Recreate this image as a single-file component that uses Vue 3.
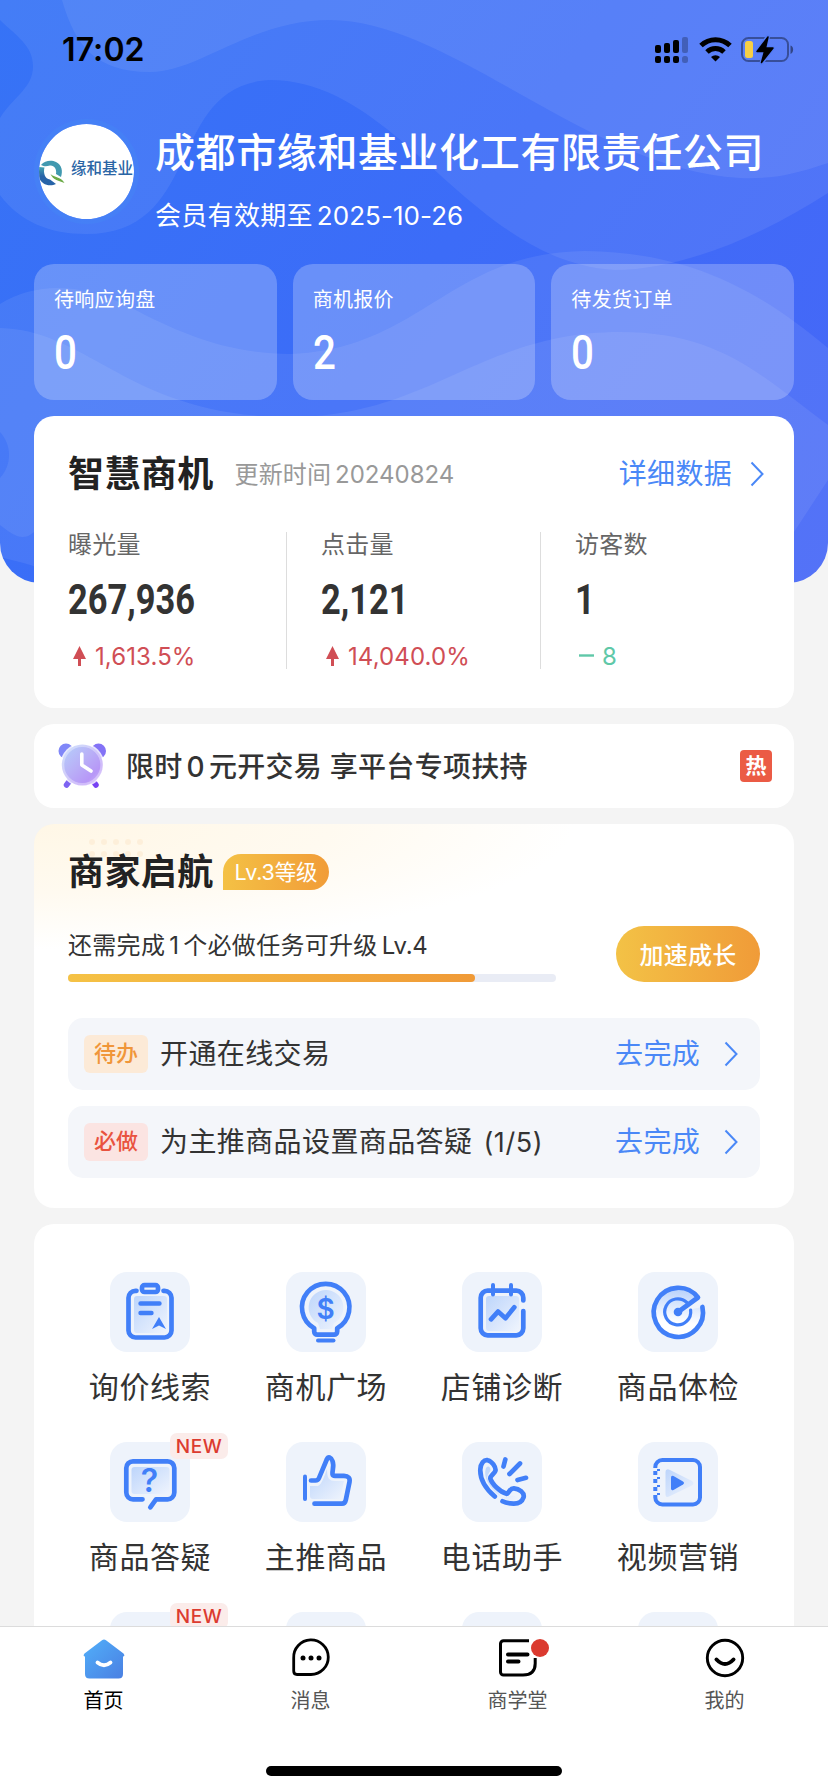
<script setup>
const stats = [
  { label: '待响应询盘', value: '0' },
  { label: '商机报价', value: '2' },
  { label: '待发货订单', value: '0' },
]
const metrics = [
  { label: '曝光量', value: '267,936', delta: '1,613.5%', up: true },
  { label: '点击量', value: '2,121', delta: '14,040.0%', up: true },
  { label: '访客数', value: '1', delta: '8', up: false },
]
const tasks = [
  { tag: '待办', kind: 'todo', text: '开通在线交易', count: '' },
  { tag: '必做', kind: 'must', text: '为主推商品设置商品答疑', count: '(1/5)' },
]
const tools = [
  { icon: 'clip', label: '询价线索' },
  { icon: 'bulb', label: '商机广场' },
  { icon: 'calendar', label: '店铺诊断' },
  { icon: 'radar', label: '商品体检' },
  { icon: 'chat', label: '商品答疑', isNew: true },
  { icon: 'thumb', label: '主推商品' },
  { icon: 'phone', label: '电话助手' },
  { icon: 'video', label: '视频营销' },
  { isNew: true },
  {},
  {},
  {},
]
const tabs = [
  { icon: 'home', label: '首页', active: true },
  { icon: 'msg', label: '消息' },
  { icon: 'school', label: '商学堂' },
  { icon: 'me', label: '我的' },
]
</script>

<template>
  <div class="page">
    <svg class="hero-bg" width="828" height="583" viewBox="0 0 828 583">
      <defs>
        <linearGradient id="hero" x1="0" y1="0" x2="828" y2="583" gradientUnits="userSpaceOnUse">
          <stop offset="0" stop-color="#3673f6" />
          <stop offset=".5" stop-color="#3c6cf8" />
          <stop offset="1" stop-color="#4767f7" />
        </linearGradient>
        <clipPath id="heroClip"><path d="M0 0H828V543a40 40 0 0 1-40 40H40a40 40 0 0 1-40-40Z" /></clipPath>
      </defs>
      <g clip-path="url(#heroClip)">
        <rect width="828" height="583" fill="url(#hero)" />
        <g fill="#fff" fill-opacity=".075">
          <path d="M0 0H828V193C760 237 680 270 615 270C470 262 400 80 270 80C165 85 205 234 86 234C50 234 20 222 0 195V118C15 95 33 88 33 66C33 45 15 35 0 20Z" />
          <path d="M62 0H828V163C790 176 770 179 740 178C590 170 450 20 330 20C250 20 200 72 150 72C95 72 75 45 62 0Z" />
          <path d="M0 304C40 280 85 285 130 307C180 334 230 354 290 354C420 350 450 252 585 251C700 252 770 300 828 348V583H60C45 565 20 563 0 557Z" />
          <path d="M0 328C90 330 130 417 290 417C430 417 480 332 620 332C720 332 760 375 828 425V480L794 532H34C22 543 12 534 0 525V478C12 465 12 445 0 432Z" />
        </g>
      </g>
    </svg>

    <div class="content">
      <header class="status">
        <span class="time">17:02</span>
        <svg width="160" height="32" viewBox="0 0 160 32">
          <g>
            <rect x="5" y="11" width="6" height="8" rx="2" /><rect x="14" y="9" width="6" height="10" rx="2" /><rect x="23" y="6" width="6" height="13" rx="2" />
            <rect x="5" y="22" width="6" height="7" rx="2" /><rect x="14" y="22" width="6" height="7" rx="2" /><rect x="23" y="22" width="6" height="7" rx="2" />
            <g opacity=".25"><rect x="32" y="3" width="6" height="16" rx="2" /><rect x="32" y="22" width="6" height="7" rx="2.5" /></g>
          </g>
          <g fill="none" stroke="#000" stroke-width="5">
            <path d="M51 11.5a21 21 0 0 1 29 0" /><path d="M57 18a12.3 12.3 0 0 1 17 0" />
          </g>
          <path d="M61 23a6.5 6.5 0 0 1 9 0l-4.5 4.6Z" />
          <rect x="92" y="4" width="46" height="23" rx="6.5" fill="none" stroke="#000" stroke-opacity=".38" stroke-width="2" />
          <path d="M140.5 11.5c3.5 1 3.500 7 0 8.500Z" fill-opacity=".45" />
          <rect x="95" y="7" width="8" height="17" rx="2.500" fill="#f7cf46" />
          <path d="M118 2.500L107 17.500h7.500L111.500 29 123 14h-7.500Z" stroke="#527bf7" stroke-width="4" stroke-linejoin="round" />
          <path d="M118 3L107 17.500h7.500L111.500 28.500 123 14h-7.500Z" stroke="#000" stroke-width="1.500" stroke-linejoin="round" />
        </svg>
      </header>

      <section class="company">
        <div class="avatar">
          <svg width="26" height="30" viewBox="0 0 26 30">
            <defs><linearGradient id="q" x1="0" y1="0" x2="0" y2="1"><stop offset="0" stop-color="#43a3b0" /><stop offset=".5" stop-color="#2763a8" /></linearGradient></defs>
            <path d="M2 6C6 1 13 1 17 3C23 6 24 12 22 18L17 15C18 10 15 6 11 6.500C8 7 6 8 2 6Z" fill="#4199b0" />
            <path d="M0 8L5.500 8.500C4 14 6 20 11 20.500L17 25C11 28 2 26 0 18Z" fill="url(#q)" />
            <path d="M11.500 15c4 4 10 2 14 9C20 22 14 21 11.500 15Z" fill="#6cab47" />
          </svg>
          <span>缘和基业</span>
        </div>
        <div class="company-text">
          <h1>成都市缘和基业化工有限责任公司</h1>
          <p>会员有效期至<span class="n">2025-10-26</span></p>
        </div>
      </section>

      <section class="stats">
        <div v-for="s in stats" :key="s.label" class="stat">
          <div class="stat-label">{{ s.label }}</div>
          <div class="stat-value">{{ s.value }}</div>
        </div>
      </section>

      <section class="card insight">
        <div class="row-head">
          <h2>智慧商机</h2>
          <span class="updated">更新时间<span class="n">20240824</span></span>
          <span class="link">详细数据</span>
          <svg class="chev" width="14" height="26" viewBox="0 0 14 26"><path d="M1.500 1.500L12.500 13L1.500 24.500" /></svg>
        </div>
        <div class="metrics">
          <div v-for="m in metrics" :key="m.label" class="metric">
            <div class="metric-label">{{ m.label }}</div>
            <div class="metric-value">{{ m.value }}</div>
            <div class="delta" :class="{ flat: !m.up }">
              <svg v-if="m.up" width="24" height="22" viewBox="0 0 24 22"><path d="M11.500 1L18 14h-5v7h-3v-7H5Z" fill="#d04e55" /></svg>
              <svg v-else width="24" height="22" viewBox="0 0 24 22"><path d="M4 10.500H19" stroke="#5fc8a8" stroke-width="2.400" /></svg>
              <span>{{ m.delta }}</span>
            </div>
          </div>
        </div>
      </section>

      <section class="card notice">
        <svg width="50" height="46" viewBox="0 0 50 46">
          <defs>
            <linearGradient id="face" x1="0" y1="0" x2="1" y2="1"><stop offset="0" stop-color="#b5d3fb" /><stop offset=".45" stop-color="#b9b0f7" /><stop offset=".75" stop-color="#b797f7" /><stop offset="1" stop-color="#d2bdfa" /></linearGradient>
          </defs>
          <circle cx="8" cy="8" r="7.500" fill="#8087f8" /><circle cx="40.500" cy="8" r="7.500" fill="#8372f6" />
          <path d="M11.500 38L8.500 42" stroke="#7d63f2" stroke-width="5.500" stroke-linecap="round" /><path d="M35 38L38 42" stroke="#7742f3" stroke-width="5.500" stroke-linecap="round" />
          <circle cx="24.300" cy="22" r="22" fill="#fff" fill-opacity=".8" />
          <circle cx="24.300" cy="22" r="20.500" fill="url(#face)" />
          <circle cx="24.300" cy="22" r="19.500" fill="none" stroke="#fff" stroke-opacity=".35" stroke-width="3" />
          <path d="M23.800 11V22L33 28" fill="none" stroke="#fff" stroke-width="3.600" stroke-linecap="round" stroke-linejoin="round" />
        </svg>
        <span class="notice-text">限时<span class="n zero">0</span>元开交易 享平台专项扶持</span>
        <span class="hot">热</span>
      </section>

      <section class="card growth">
        <div class="dots"><i v-for="d in 10" :key="d"></i></div>
        <div class="growth-head"><h2>商家启航</h2><span class="level">Lv.3等级</span></div>
        <div class="upgrade">
          <div>
            <p>还需完成<span class="n">1</span><span class="after">个必做任务可升级</span><span class="n lv">Lv.4</span></p>
            <div class="track"><div class="fill"></div></div>
          </div>
          <button>加速成长</button>
        </div>
        <div v-for="t in tasks" :key="t.text" class="task">
          <span class="tag" :class="t.kind">{{ t.tag }}</span>
          <span class="task-text">{{ t.text }}<span v-if="t.count" class="count">{{ t.count }}</span></span>
          <span class="link">去完成</span>
          <svg class="chev" width="14" height="26" viewBox="0 0 14 26"><path d="M1.500 1.500L12.500 13L1.500 24.500" /></svg>
        </div>
      </section>

      <section class="card tools">
        <svg class="defs" width="0" height="0">
          <defs>
            <linearGradient id="soft" x1="0" y1="0" x2="1" y2="1"><stop offset="0" stop-color="#bdd5fb" /><stop offset="1" stop-color="#eff4fd" /></linearGradient>
            <linearGradient id="softDown" x1=".6" y1="0" x2=".5" y2="1"><stop offset="0" stop-color="#b6d0fb" /><stop offset=".7" stop-color="#fff" /></linearGradient>
          </defs>
        </svg>
        <div v-for="(t, i) in tools" :key="i" class="tool">
          <div class="tile">
            <svg width="80" height="80" viewBox="0 0 80 80" class="glyph">
              <template v-if="t.icon === 'clip'">
                <rect class="f" x="24" y="24" width="33" height="37" rx="3" />
                <path d="M26.500 18.800h-1a7 7 0 0 0-7 7V58.500a7 7 0 0 0 7 7h29a7 7 0 0 0 7-7V25.800a7 7 0 0 0-7-7H53.500" />
                <rect x="32" y="13.200" width="16" height="6.800" rx="2.500" />
                <path d="M30.500 31.500H49.500M30.500 41H41.500" stroke-width="4.400" />
                <path class="s" d="M49 45l7 12-7-3.500-7 3.500Z" />
              </template>
              <template v-else-if="t.icon === 'bulb'">
                <path class="f" d="M40 18a17.500 17.500 0 0 1 8 33l-2 6H34l-2-6A17.500 17.500 0 0 1 40 18Z" />
                <path d="M28.200 56.200A23.700 23.700 0 1 1 51.200 56.200V59.600a3 3 0 0 1-3 3H31.200a3 3 0 0 1-3-3Z" />
                <path d="M32 68.600H47.500" stroke-width="4" />
                <text x="39.700" y="46.500" font-size="28">$</text>
              </template>
              <template v-else-if="t.icon === 'calendar'">
                <rect class="f" x="24" y="24" width="33" height="35" rx="3" />
                <path d="M61.300 39V56.300a7 7 0 0 1-7 7H25.700a7 7 0 0 1-7-7V25.700a7 7 0 0 1 7-7H54.300a7 7 0 0 1 7 7V28.500" />
                <path d="M31 13V22.500M49 13V22.500" stroke-width="4" />
                <path d="M29 47.300L36 39.600L43.500 46.200L52.300 35.300" />
              </template>
              <template v-else-if="t.icon === 'radar'">
                <path d="M59.500 25.500A24.500 24.500 0 1 0 64.300 35L40 40Z" fill="url(#softDown)" stroke="none" />
                <path d="M48.800 30.500A13 13 0 1 0 52.600 38" stroke-width="3.200" />
                <path d="M40 40L60 25.500A24.600 24.600 0 1 0 64.400 35" />
                <circle class="s" cx="40" cy="40" r="4.300" />
              </template>
              <template v-else-if="t.icon === 'chat'">
                <rect class="f" x="21.500" y="25" width="38" height="27" rx="3" />
                <path d="M32.500 57.300H23a6.700 6.700 0 0 1-6.700-6.700V26a6.700 6.700 0 0 1 6.700-6.700H57.600a6.700 6.700 0 0 1 6.700 6.700V50.600a6.700 6.700 0 0 1-6.700 6.700H46L40.300 65.300" />
                <text x="39.500" y="50" font-size="32">?</text>
              </template>
              <template v-else-if="t.icon === 'thumb'">
                <path class="f" d="M24 44h8c4-2 6-9 9-17 0 9 2 12 8 12h9l-4 18H27a3 3 0 0 1-3-3Z" />
                <path d="M19 34.500V57" stroke-width="4" />
                <path d="M25 38.500H29.500Q32 38.500 33 36L41 17C42 14 45 15 46.500 19C48.500 24 46 29 46.500 32Q46.800 33.800 49 33.800H58Q64.600 34 63.500 40L59.800 58Q59 61.700 56 61.700H28.500" />
              </template>
              <template v-else-if="t.icon === 'phone'">
                <path class="f" d="M23.500 28c1-5 5-4 5 0 0 2-4 5-3 9l14 18c4 2 8-3 13-1 5 2 3 5-1 5-12 0-31-17-28-31Z" />
                <path d="M32.800 54.500C23 46 18 36 18.300 27.500C18.600 21 22 17.700 25.500 18.200C30 19 34 25 33.500 28.500C33 31.500 28 33.500 28.300 36.500C30 42 38 50 44.500 51.800C47 52 47 46 52 46.300C57 46.500 63 51 61.500 55.500C60 60 56 61.700 51.500 61.600C47 61.500 43.500 61 40.500 59.300" />
                <path d="M43.300 17.500L41.500 24.500M58 21.500L47.500 32M64 35.800L55.500 38" />
              </template>
              <template v-else-if="t.icon === 'video'">
                <path d="M29 27.500Q27.500 27.500 27.500 30V52Q27.500 56 31 54.500L54 43.500Q57 41.500 54 39L32 28Q30 27 29 27.500Z" fill="url(#soft)" stroke="none" />
                <path d="M17.300 26V25a7 7 0 0 1 7-7H55a7 7 0 0 1 7 7V55.500a7 7 0 0 1-7 7H24.300a7 7 0 0 1-7-7V54" stroke-width="4" stroke-linecap="butt" />
                <path d="M17.300 29V54" stroke-width="4" stroke-dasharray="4 4" stroke-linecap="butt" />
                <path d="M20.500 27V54" stroke-width="3" stroke-dasharray="2 6" stroke-linecap="butt" />
                <path class="s" d="M33 35.500Q33 33 35.500 34L45 39.500Q47 41 45 42.500L35.500 48Q33 49 33 46.500Z" />
              </template>
            </svg>
            <span v-if="t.isNew" class="new">NEW</span>
          </div>
          <span class="tool-label">{{ t.label }}</span>
        </div>
      </section>
    </div>

    <nav class="tabbar">
      <div class="tabs">
        <div v-for="t in tabs" :key="t.label" class="tab" :class="{ active: t.active }">
          <svg width="44" height="44" viewBox="0 0 44 44">
            <template v-if="t.icon === 'home'">
              <defs><linearGradient id="home" x1="0" y1="0" x2="1" y2="1"><stop offset="0" stop-color="#51b0fa" /><stop offset="1" stop-color="#4a7fe2" /></linearGradient></defs>
              <path d="M20 2.200Q22 .6 24 2.200L41.500 15.500Q43.500 18 41 18.500V36Q41 40.500 36.500 40.500H7.500Q3 40.500 3 36V18.500Q.5 18 2.500 15.500Z" fill="url(#home)" />
              <path d="M15.500 24.500Q22 30 28.500 24.500" fill="none" stroke="#fff" stroke-width="3.800" stroke-linecap="round" />
            </template>
            <template v-else-if="t.icon === 'msg'">
              <path d="M4.700 20A17.300 17.300 0 1 1 22 36.500H8Q4.700 36.500 4.700 33Z" fill="none" stroke="#000" stroke-width="2.800" />
              <circle cx="14" cy="20" r="2.500" /><circle cx="22" cy="20" r="2.500" /><circle cx="30" cy="20" r="2.500" />
            </template>
            <template v-else-if="t.icon === 'school'">
              <path d="M33 2.800H7.500a3 3 0 0 0-3 3V34a3 3 0 0 0 3 3H27Q39.200 37 39.200 25.500V20" fill="none" stroke="#000" stroke-width="3" />
              <path d="M12 16.500H31.500M12 23.500H22.500" stroke="#000" stroke-width="4" stroke-linecap="round" />
            </template>
            <template v-else>
              <circle cx="22" cy="20" r="17.700" fill="none" stroke="#000" stroke-width="2.900" />
              <path d="M13.500 21.500Q22 30.500 30.500 21.500" fill="none" stroke="#000" stroke-width="4" stroke-linecap="round" />
            </template>
          </svg>
          <i v-if="t.icon === 'school'" class="dot"></i>
          <span>{{ t.label }}</span>
        </div>
      </div>
      <div class="indicator"></div>
    </nav>
  </div>
</template>

<style>
body { margin: 0; background: #f4f4f4; }
</style>

<style scoped>
.page {
  position: relative; width: 828px; height: 1792px; overflow: hidden;
  display: flex; flex-direction: column; background: #f4f4f4; color: #333;
  font-family: Inter, "Noto Sans CJK SC", sans-serif; letter-spacing: .3px;
}
.page * { box-sizing: border-box; }
h1, h2, p { margin: 0; }
.hero-bg { position: absolute; left: 0; top: 0; }
.content { position: relative; height: 1626px; overflow: hidden; padding: 0 34px; display: flex; flex-direction: column; }
.status { height: 100px; flex: none; display: flex; justify-content: space-between; padding: 34px 0 0 28px; color: #000; }
.time { font-size: 32px; line-height: 32px; font-weight: 600; letter-spacing: .1px; }
.status svg { margin-right: -16px; }
.company { height: 164px; flex: none; display: flex; gap: 16px; }
.avatar {
  width: 105px; height: 105px; margin-top: 19px; flex: none; border: 5px solid rgba(70, 130, 245, .75); background: #fff; background-clip: padding-box;
  border-radius: 50%; overflow: hidden; display: flex; align-items: center; gap: 6px; color: #2a65a5;
  font-size: 15.500px; font-weight: 500; letter-spacing: 0; white-space: nowrap;
}
.avatar svg { flex: none; margin-top: 4px; }
.avatar span { line-height: 20px; margin-top: -5px; }
.company-text { color: #fff; padding-top: 27px; white-space: nowrap; }
h1 { font-size: 40px; line-height: 52px; font-weight: 500; letter-spacing: .6px; }
.company-text p { font-size: 26px; line-height: 34px; margin-top: 20px; }
.company-text .n { letter-spacing: .05px; }
.n { margin-left: 4px; }
.stats { display: grid; grid-template-columns: repeat(3, 1fr); gap: 16px; height: 136px; flex: none; }
.stat { background: rgba(255, 255, 255, .24); border-radius: 20px; padding: 22px 20px 0; color: #fff; }
.stat-label { font-size: 20px; line-height: 28px; }
.stat-value { font-family: Roboto, sans-serif; font-size: 48px; line-height: 56px; margin-top: 11px; font-weight: 500; transform: scaleX(.84); transform-origin: left; letter-spacing: 0; }
.card { background: #fff; border-radius: 20px; margin-top: 16px; flex: none; }
.insight { height: 292px; padding: 32px 30px 0 34px; }
h2 { font-size: 36px; line-height: 52px; font-weight: 600; letter-spacing: .4px; color: #222; }
.row-head { display: flex; align-items: center; height: 52px; white-space: nowrap; }
.updated { font-size: 24px; line-height: 36px; color: #999; margin: 2px 0 0 21px; letter-spacing: .1px; }
.updated .n { letter-spacing: 0; }
.link { margin-left: auto; font-size: 28px; line-height: 40px; color: #4a88f7; margin-top: 0; }
.chev { margin-left: 18px; fill: none; stroke: #4a88f7; stroke-width: 2; }
.metrics { display: grid; grid-template-columns: 218px 254px 1fr; margin-top: 32px; height: 136px; }
.metric { border-left: 1px solid #ddd; padding-left: 34px; }
.metric:first-child { border: 0; padding: 0; }
.metric-label { font-size: 24px; line-height: 26px; color: #666; }
.metric-value { font-family: Roboto, sans-serif; font-size: 42px; line-height: 50px; font-weight: 700; margin-top: 17px; transform: scaleX(.82); transform-origin: left; letter-spacing: 0; }
.delta { display: flex; align-items: center; gap: 3px; margin-top: 18px; height: 26px; font-size: 24px; color: #d04e55; letter-spacing: .1px; }
.delta.flat { color: #5fc8a8; }
.notice { height: 84px; display: flex; align-items: center; padding: 0 22px 0 24px; }
.notice-text { margin: -2px 0 0 18px; font-size: 28px; font-weight: 500; white-space: nowrap; letter-spacing: .28px; }
.zero { margin: 0 4px; font-weight: 500; }
.hot { margin-left: auto; width: 32px; height: 32px; border-radius: 4px; background: #eb5b45; color: #fff; font-size: 21px; line-height: 31px; font-weight: 700; text-align: center; letter-spacing: 0; }
.growth {
  position: relative; height: 384px; padding: 23px 34px 0;
  background: radial-gradient(ellipse 540px 125px at 0 0, #fff7e6 0, #fffaf0 55%, #fff 100%), #fff;
}
.dots { position: absolute; left: 55px; top: 15px; display: grid; grid-template-columns: repeat(5, 6px); gap: 6px; }
.dots i { width: 6px; height: 6px; border-radius: 50%; background: #fcebd3; opacity: .7; }
.growth-head { position: relative; display: flex; align-items: center; gap: 9px; height: 50px; }
.level { height: 36px; padding: 0 12px; border-radius: 18px 18px 18px 0; background: linear-gradient(90deg, #f4c145, #f19c38); color: #fff; font-size: 21.500px; line-height: 36px; letter-spacing: -.15px; }
.upgrade { display: flex; justify-content: space-between; padding-top: 29px; height: 121px; }
.upgrade p { font-size: 24px; line-height: 30px; margin: 5px 0 0 0; white-space: nowrap; }
.after { margin-left: 4px; }
.upgrade .lv { letter-spacing: -.2px; margin-left: 4px; }
.track { margin-top: 13px; width: 488px; height: 8px; border-radius: 4px; background: #e9ecf5; }
.fill { width: 407px; height: 8px; border-radius: 4px; background: linear-gradient(90deg, #f5c245, #f09a37); }
button { width: 144px; height: 56px; border: 0; padding: 0 0 2px; border-radius: 28px; background: linear-gradient(90deg, #f3c246, #f09b38); color: #fff; font: 500 24px Inter, "Noto Sans CJK SC", sans-serif; letter-spacing: .3px; }
.task { display: flex; align-items: center; height: 72px; padding: 0 22px 0 16px; border-radius: 15px; background: #f4f6fa; white-space: nowrap; }
.task + .task { margin-top: 16px; }
.task .chev { margin-left: 24px; }
.tag { width: 64px; height: 38px; border-radius: 6px; text-align: center; font-size: 22px; line-height: 37px; font-weight: 500; letter-spacing: 0; }
.todo { color: #f0963a; background: #fcead7; }
.must { color: #e9533f; background: #fbe4e2; }
.task-text { margin: 0 0 0 12px; font-size: 28px; line-height: 40px; letter-spacing: .4px; }
.count { margin-left: 11px; font-size: 27px; letter-spacing: .6px; }
.tools { position: relative; height: 600px; padding: 48px 28px 0; display: grid; grid-template-columns: repeat(4, 176px); grid-auto-rows: 170px; }
.defs { position: absolute; }
.tool { display: flex; flex-direction: column; align-items: center; }
.tile { position: relative; width: 80px; height: 80px; border-radius: 17px; background: #eef3fb; }
.glyph { display: block; fill: none; stroke: #417ff8; stroke-width: 4.700; stroke-linecap: round; stroke-linejoin: round; }
.glyph .f { fill: url(#soft); stroke: none; }
.glyph .s { fill: #417ff8; stroke: none; }
.glyph text { fill: #417ff8; stroke: none; font-weight: 600; text-anchor: middle; letter-spacing: 0; }
.new { position: absolute; left: 60px; top: -9px; width: 58px; height: 26px; border-radius: 7px; background: #fbecea; color: #dc3b30; font-size: 19px; line-height: 27px; text-align: center; font-weight: 500; letter-spacing: .5px; }
.tool-label { margin-top: 15px; font-size: 30px; line-height: 40px; letter-spacing: .6px; white-space: nowrap; }
.tabbar { position: relative; height: 166px; background: #fff; border-top: 1px solid #dcdcdc; display: flex; flex-direction: column; align-items: center; }
.tabs { display: flex; width: 828px; height: 139px; }
.tab { position: relative; flex: 1; display: flex; flex-direction: column; align-items: center; padding-top: 11px; font-size: 20px; line-height: 28px; color: #555; letter-spacing: 0; }
.tab span { margin-top: 5px; }
.tab.active { color: #000; }
.dot { position: absolute; left: 117px; top: 12px; width: 18px; height: 18px; border-radius: 50%; background: #db3a2f; }
.indicator { width: 296px; height: 10px; border-radius: 5px; background: #000; }
</style>
